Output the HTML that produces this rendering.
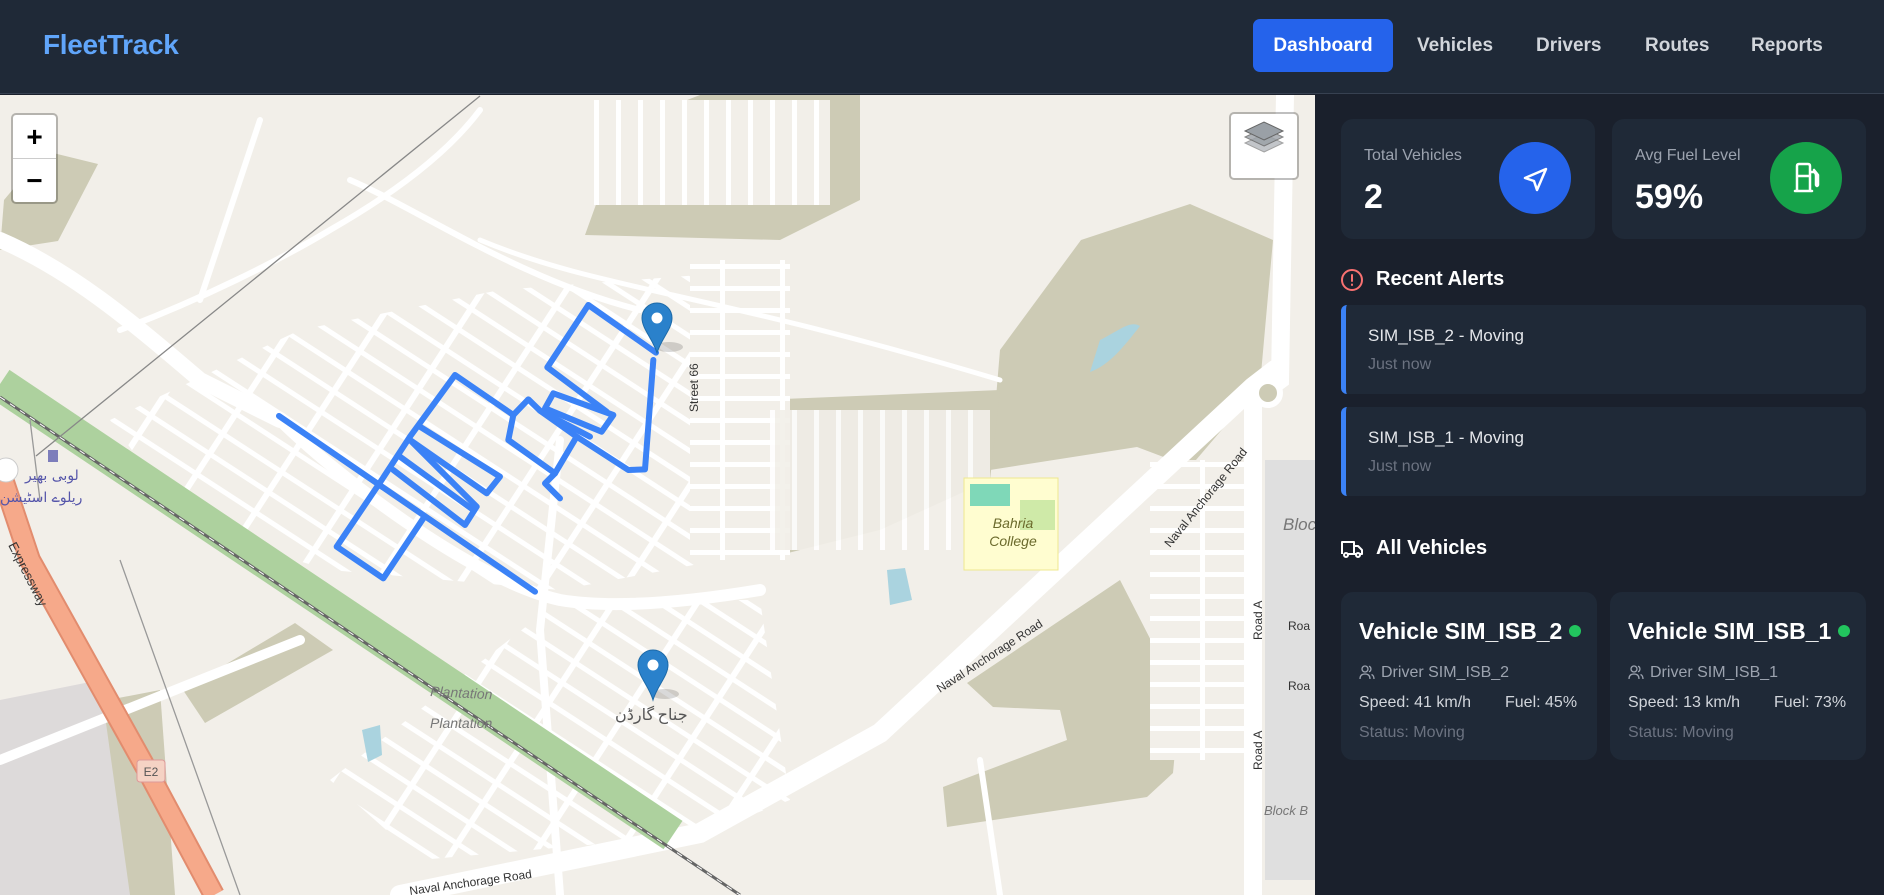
<!DOCTYPE html>
<html><head><meta charset="utf-8">
<style>
*{margin:0;padding:0;box-sizing:border-box}
body{width:1884px;height:895px;overflow:hidden;background:#1a202c;font-family:"Liberation Sans","Noto Sans CJK SC",sans-serif;position:relative}
.hdr{position:absolute;left:0;top:0;width:1884px;height:94px;background:#1f2937;border-bottom:1px solid #374151}
.logo{position:absolute;left:43px;top:29px;font-size:28px;font-weight:bold;color:#60a5fa;letter-spacing:-0.3px}
.nav{position:absolute;top:19px;height:53px;line-height:53px;font-size:19px;font-weight:bold;color:#d1d5db}
.nav.act{background:#2563eb;color:#fff;border-radius:7px;left:1253px;width:140px;text-align:center}
.map{position:absolute;left:0;top:95px;width:1315px;height:800px;overflow:hidden;background:#f2efe9}
.side{position:absolute;left:1315px;top:95px;width:569px;height:800px;background:#1a202c}
.card{position:absolute;background:#1f2937;border-radius:12px}
.lbl{position:absolute;font-size:16px;color:#9ca3af}
.big{position:absolute;font-size:34px;font-weight:bold;color:#fff}
.circ{position:absolute;width:72px;height:72px;border-radius:50%}
.h2{position:absolute;font-size:20px;font-weight:bold;color:#fff}
.alert{position:absolute;left:1341px;width:525px;background:#1f2937;border-left:5px solid #3b82f6;border-radius:6px}
.alert .t{position:absolute;left:22px;top:21px;font-size:17px;color:#e5e7eb}
.alert .s{position:absolute;left:22px;top:51px;font-size:16px;color:#6b7280}
.vt{position:absolute;left:18px;top:26px;font-size:23px;font-weight:bold;color:#fff}
.dot{position:absolute;width:12px;height:12px;border-radius:50%;background:#22c55e;top:33px}
.vd{position:absolute;font-size:16px;color:#9ca3af}
.vs{position:absolute;font-size:16px;color:#6b7280}
.zc{position:absolute;left:11px;top:113px;width:47px;height:91px;background:#fff;border:2px solid rgba(0,0,0,.25);border-radius:5px;background-clip:padding-box}
.zc div{height:44px;line-height:44px;text-align:center;font-size:28px;color:#000;font-weight:bold}
.lay{position:absolute;left:1229px;top:112px;width:70px;height:68px;background:#fff;border:2px solid rgba(0,0,0,.25);border-radius:5px;background-clip:padding-box}
</style></head><body>
<div class="hdr">
<div class="logo">FleetTrack</div>
<div class="nav act">Dashboard</div>
<div class="nav" style="left:1417px">Vehicles</div>
<div class="nav" style="left:1536px">Drivers</div>
<div class="nav" style="left:1645px">Routes</div>
<div class="nav" style="left:1751px">Reports</div>
</div>

<div class="map">
<svg width="1315" height="800" viewBox="0 95 1315 800" xmlns="http://www.w3.org/2000/svg" style="position:absolute;left:0;top:0">
<defs>
<pattern id="pd2" width="70" height="24" patternUnits="userSpaceOnUse" patternTransform="rotate(33)">
<rect width="70" height="24" fill="#f2efe9"/><rect width="70" height="5" fill="#fff"/><rect width="6" height="24" fill="#fff"/>
</pattern>
<pattern id="pv" width="22" height="60" patternUnits="userSpaceOnUse">
<rect width="22" height="60" fill="#f2efe9"/><rect width="5" height="60" fill="#fff"/>
</pattern>
<pattern id="ph" width="60" height="22" patternUnits="userSpaceOnUse">
<rect width="60" height="22" fill="#f2efe9"/><rect width="60" height="5" fill="#fff"/><rect width="5" height="22" fill="#fff"/>
</pattern>
</defs>
<rect x="0" y="95" width="1315" height="800" fill="#f2efe9"/>
<g fill="#cdcbb5">
<polygon points="585,235 625,124 700,95 860,95 860,200 780,240"/>
<polygon points="4,200 45,151 98,164 58,241 0,250"/>
<polygon points="990,470 1000,350 1081,240 1190,204 1273,240 1260,385 1190,467 1137,447"/>
<polygon points="1120,580 1180,697 1173,773 1147,797 947,827 943,787 1067,740 1060,710 993,707 967,683"/>
<polygon points="760,400 1000,390 990,480 880,530 760,560"/>
<polygon points="183,690 295,623 333,650 205,723"/>
<polygon points="56,710 160,690 175,895 120,895"/>
</g>
<polygon points="110,420 300,330 500,290 700,275 720,560 560,590 330,570 190,530" fill="url(#pd2)"/>
<polygon points="560,600 760,600 790,800 700,835 420,860 330,780" fill="url(#pd2)"/>
<rect x="690" y="260" width="100" height="300" fill="url(#ph)"/>
<rect x="585" y="100" width="245" height="105" fill="url(#pv)"/>
<rect x="770" y="410" width="220" height="140" fill="url(#pv)" opacity="0.9"/>
<rect x="1150" y="460" width="100" height="300" fill="url(#ph)"/>
<polygon points="0,700 100,680 130,895 0,895" fill="#dddada"/>
<rect x="1265" y="460" width="50" height="420" fill="#dfdfdf"/>
<g stroke="#fff" fill="none" stroke-linecap="round">
<path d="M0,240 C70,270 130,320 200,380 L280,420" stroke-width="16"/>
<path d="M280,420 C330,470 470,580 560,600 C620,610 700,600 760,590" stroke-width="12"/>
<path d="M120,330 C200,300 280,260 330,230 C400,190 450,150 480,110" stroke-width="6"/>
<path d="M350,180 C420,210 520,280 640,310" stroke-width="6"/>
<path d="M480,240 C600,290 700,290 1000,380" stroke-width="5"/>
<path d="M1275,370 L1253,387 L880,733 L700,833 L400,895" stroke-width="20"/>
<path d="M1285,95 L1280,380 L1253,400 L1253,895" stroke-width="18"/>
<path d="M560,440 L540,630 L560,895" stroke-width="8"/>
<path d="M260,120 L200,300" stroke-width="6"/>
<path d="M0,760 L300,640" stroke-width="10"/>
<path d="M980,760 L1000,895" stroke-width="6"/>
</g>
<circle cx="1268" cy="393" r="12" fill="#cdcbb5" stroke="#fff" stroke-width="6"/>
<path d="M0,384 L673,835" stroke="#add19e" stroke-width="34"/>
<path d="M0,397 L740,895" stroke="#666" stroke-width="3"/>
<path d="M0,397 L740,895" stroke="#fff" stroke-width="1" stroke-dasharray="6 6"/>
<path d="M40,500 L30,420 M120,560 L240,895" stroke="#999" stroke-width="1.3"/>
<path d="M36,456 L480,96" stroke="#888" stroke-width="1.3"/>
<path d="M0,470 L30,560 L147,770 L214,895" stroke="#e28c6e" stroke-width="22" fill="none"/>
<path d="M0,470 L30,560 L147,770 L214,895" stroke="#f6a98a" stroke-width="18" fill="none"/>
<path d="M1100,340 C1120,330 1130,320 1140,326 C1125,345 1110,365 1090,372 Z" fill="#aad3df"/>
<path d="M362,730 L380,725 L382,755 L368,762 Z" fill="#aad3df"/>
<path d="M887,570 L905,568 L912,600 L890,605 Z" fill="#aad3df"/>
<rect x="964" y="478" width="94" height="92" fill="#fffdd0" stroke="#efe88f"/>
<rect x="970" y="484" width="40" height="22" fill="#7fd8b8"/>
<rect x="1020" y="500" width="35" height="30" fill="#cfeaa8"/>
<text x="1013" y="528" font-family="Liberation Sans" font-style="italic" font-size="14" fill="#6b6a2c" text-anchor="middle">Bahria</text>
<text x="1013" y="546" font-family="Liberation Sans" font-style="italic" font-size="14" fill="#6b6a2c" text-anchor="middle">College</text>
<g font-family="Liberation Sans" fill="#333" font-size="12">
<text transform="translate(940,693) rotate(-33)">Naval Anchorage Road</text>
<text transform="translate(1170,548) rotate(-51)">Naval Anchorage Road</text>
<text transform="translate(410,895) rotate(-8)">Naval Anchorage Road</text>
<text transform="translate(698,412) rotate(-90)">Street 66</text>
<text transform="translate(1262,640) rotate(-90)">Road A</text>
<text transform="translate(1262,770) rotate(-90)">Road A</text>
<text x="1288" y="630">Roa</text><text x="1288" y="690">Roa</text>
<text transform="translate(8,545) rotate(63)" font-size="13">Expressway</text>
</g>
<g font-family="Liberation Sans" font-style="italic" fill="#777" font-size="14">
<text x="430" y="696" transform="rotate(3 430 696)">Plantation</text>
<text x="430" y="728">Plantation</text>
<text x="1283" y="530" font-size="17">Block</text>
<text x="1264" y="815" font-size="13">Block B</text>
</g>
<text x="615" y="720" font-family="Noto Sans CJK SC,DejaVu Sans,sans-serif" font-size="16" fill="#555">جناح گارڈن</text>
<text x="25" y="480" font-family="DejaVu Sans,sans-serif" font-size="14" fill="#5555aa">لوبی بھیر</text>
<text x="0" y="502" font-family="DejaVu Sans,sans-serif" font-size="14" fill="#5555aa">ریلوے اسٹیشن</text>
<rect x="48" y="450" width="10" height="12" fill="#7d7dbb"/>
<circle cx="6" cy="470" r="12" fill="#fff" stroke="#ccc"/>
<rect x="137" y="760" width="28" height="22" rx="3" fill="#f5d2c4" stroke="#d99"/>
<text x="151" y="776" font-family="Liberation Sans" font-size="12" fill="#555" text-anchor="middle">E2</text>
<g transform="translate(300,280) scale(0.33333)" fill="none" stroke="#3b82f6" stroke-width="18" stroke-linejoin="round" stroke-linecap="round">
<path d="M-63,408 L705,935"/>
<path d="M1068,218 L865,75 L742,262 L920,395"/>
<path d="M760,340 L940,405 L905,455 L735,385 Z"/>
<path d="M830,470 L985,570 L1035,568 L1060,240"/>
<path d="M640,405 L465,285 L330,470 L245,600 L110,800 L250,895 L370,715"/>
<path d="M640,405 L685,358 L720,392 L830,470 L765,580 L735,610 L780,655"/>
<path d="M640,405 L625,480 L765,580"/>
<path d="M360,440 L600,590 L560,640 L330,480"/>
<path d="M330,480 L530,680 L495,735 L280,570"/>
<path d="M300,530 L520,690"/>
<path d="M720,392 L870,470"/>
</g>
<g transform="translate(657,353)">
<ellipse cx="12" cy="-6" rx="14" ry="5" fill="rgba(0,0,0,.15)"/>
<path d="M0,0 C-4,-14 -15,-24 -15,-35 A15,15 0 1 1 15,-35 C15,-24 4,-14 0,0 Z" fill="#2a81cb" stroke="#1d6aa8"/>
<circle cx="0" cy="-35" r="5.5" fill="#fff"/>
</g>
<g transform="translate(653,700)">
<ellipse cx="12" cy="-6" rx="14" ry="5" fill="rgba(0,0,0,.15)"/>
<path d="M0,0 C-4,-14 -15,-24 -15,-35 A15,15 0 1 1 15,-35 C15,-24 4,-14 0,0 Z" fill="#2a81cb" stroke="#1d6aa8"/>
<circle cx="0" cy="-35" r="5.5" fill="#fff"/>
</g>
</svg>
</div>
<div class="zc"><div style="border-bottom:1px solid #ccc">+</div><div>−</div></div>
<div class="lay"><svg width="66" height="64" viewBox="0 0 66 64"><g fill="#9aa0a6" stroke="#666" stroke-width="1"><path d="M33,38 L52,29 L33,20 L14,29 Z" opacity=".6"/><path d="M33,32 L52,23 L33,14 L14,23 Z" opacity=".8"/><path d="M33,26 L52,17 L33,8 L14,17 Z"/></g></svg></div>

<div class="side"></div>
<div class="card" style="left:1341px;top:119px;width:254px;height:120px">
<div class="lbl" style="left:23px;top:28px">Total Vehicles</div>
<div class="big" style="left:23px;top:59px">2</div>
<div class="circ" style="left:158px;top:23px;background:#2563eb"><svg width="72" height="72" viewBox="0 0 72 72"><path d="M26,36 L47,27 L38,48 L35,39 Z" fill="none" stroke="#fff" stroke-width="2.5" stroke-linejoin="round"/></svg></div>
</div>
<div class="card" style="left:1612px;top:119px;width:254px;height:120px">
<div class="lbl" style="left:23px;top:28px">Avg Fuel Level</div>
<div class="big" style="left:23px;top:59px">59%</div>
<div class="circ" style="left:158px;top:23px;background:#16a34a"><svg width="72" height="72" viewBox="0 0 72 72"><g fill="none" stroke="#fff" stroke-width="2.5" stroke-linejoin="round" stroke-linecap="round"><path d="M27,49 L27,24 Q27,22 29,22 L38,22 Q40,22 40,24 L40,49 M25,49 L42,49 M27,34 L40,34 M40,30 L44,30 Q46,31 46,34 L46,43 Q47,45 48,43 L48,33 L44,28"/></g></svg></div>
</div>

<svg style="position:absolute;left:1340px;top:268px" width="24" height="24" viewBox="0 0 24 24"><circle cx="12" cy="12" r="10" fill="none" stroke="#f87171" stroke-width="2"/><path d="M12,7 L12,13 M12,16.5 L12,17" stroke="#f87171" stroke-width="2" stroke-linecap="round"/></svg>
<div class="h2" style="left:1376px;top:268px">Recent Alerts</div>
<div class="alert" style="top:305px;height:89px"><div class="t">SIM_ISB_2 - Moving</div><div class="s">Just now</div></div>
<div class="alert" style="top:407px;height:89px"><div class="t">SIM_ISB_1 - Moving</div><div class="s">Just now</div></div>

<svg style="position:absolute;left:1340px;top:537px" width="24" height="24" viewBox="0 0 24 24"><g fill="none" stroke="#fff" stroke-width="2" stroke-linejoin="round"><path d="M2,17 L2,5 L14,5 L14,17 M14,9 L18,9 L22,13 L22,17 L20,17 M8,17 L16,17"/><circle cx="6" cy="18" r="2"/><circle cx="18" cy="18" r="2"/></g></svg>
<div class="h2" style="left:1376px;top:537px">All Vehicles</div>

<div class="card" style="left:1341px;top:592px;width:256px;height:168px">
<div class="vt">Vehicle SIM_ISB_2</div><div class="dot" style="left:228px"></div>
<svg style="position:absolute;left:18px;top:72px" width="16" height="16" viewBox="0 0 16 16"><g fill="none" stroke="#9ca3af" stroke-width="1.3"><circle cx="6" cy="5" r="3"/><path d="M1,15 Q1,10 6,10 Q11,10 11,15 M10,2.2 A3,3 0 0 1 10,7.8 M12.5,10.5 Q15,11.5 15,15"/></g></svg>
<div class="vd" style="left:40px;top:72px">Driver SIM_ISB_2</div>
<div class="vd" style="left:18px;top:102px;color:#d1d5db">Speed: 41 km/h</div>
<div class="vd" style="left:164px;top:102px;color:#d1d5db">Fuel: 45%</div>
<div class="vs" style="left:18px;top:132px">Status: Moving</div>
</div>
<div class="card" style="left:1610px;top:592px;width:256px;height:168px">
<div class="vt">Vehicle SIM_ISB_1</div><div class="dot" style="left:228px"></div>
<svg style="position:absolute;left:18px;top:72px" width="16" height="16" viewBox="0 0 16 16"><g fill="none" stroke="#9ca3af" stroke-width="1.3"><circle cx="6" cy="5" r="3"/><path d="M1,15 Q1,10 6,10 Q11,10 11,15 M10,2.2 A3,3 0 0 1 10,7.8 M12.5,10.5 Q15,11.5 15,15"/></g></svg>
<div class="vd" style="left:40px;top:72px">Driver SIM_ISB_1</div>
<div class="vd" style="left:18px;top:102px;color:#d1d5db">Speed: 13 km/h</div>
<div class="vd" style="left:164px;top:102px;color:#d1d5db">Fuel: 73%</div>
<div class="vs" style="left:18px;top:132px">Status: Moving</div>
</div>
</body></html>
